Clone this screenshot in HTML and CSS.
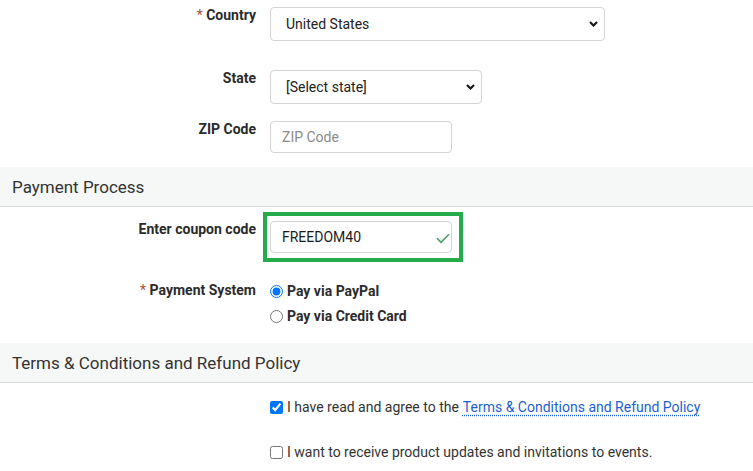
FILE: index.html
```html
<!DOCTYPE html>
<html>
<head>
<meta charset="utf-8">
<link rel="stylesheet" href="styles.css">
</head>
<body>
<div class="form">
  <div class="row row-country">
    <label class="lbl"><span class="req">*</span> Country</label>
    <div class="ctl">
      <div class="sel-wrap sel-wide">
        <select class="sel"><option>United States</option></select>
        <svg class="chev" width="9" height="6" viewBox="0 0 9 6"><path d="M1 1 L4.5 4.5 L8 1" fill="none" stroke="#1a1a1a" stroke-width="2.2"/></svg>
      </div>
    </div>
  </div>
  <div class="row row-state">
    <label class="lbl">State</label>
    <div class="ctl">
      <div class="sel-wrap sel-mid">
        <select class="sel"><option>[Select state]</option></select>
        <svg class="chev" width="9" height="6" viewBox="0 0 9 6"><path d="M1 1 L4.5 4.5 L8 1" fill="none" stroke="#1a1a1a" stroke-width="2.2"/></svg>
      </div>
    </div>
  </div>
  <div class="row row-zip">
    <label class="lbl">ZIP Code</label>
    <div class="ctl"><input class="inp" type="text" placeholder="ZIP Code"></div>
  </div>

  <div class="section-head">Payment Process</div>

  <div class="row row-coupon">
    <label class="lbl">Enter coupon code</label>
    <div class="ctl">
      <div class="coupon-wrap">
        <input class="inp" type="text" value="FREEDOM40">
        <svg class="ok" width="14" height="11" viewBox="0 0 14 11"><path d="M1 5.2 L5 9.3 L13 1.2" fill="none" stroke="#4f9a68" stroke-width="1.6"/></svg>
        <span class="highlight"></span>
      </div>
    </div>
  </div>

  <div class="row row-pay">
    <label class="lbl lbl-pay"><span class="req">*</span> Payment System</label>
    <div class="ctl radios">
      <label class="opt"><input type="radio" name="ps" checked> Pay via PayPal</label>
      <label class="opt opt-second"><input type="radio" name="ps"> Pay via Credit Card</label>
    </div>
  </div>

  <div class="section-head">Terms &amp; Conditions and Refund Policy</div>

  <div class="checks">
    <label class="chk chk-first"><input type="checkbox" checked> I have read and agree to the <a href="#" class="link">Terms &amp; Conditions and Refund Policy</a></label>
    <label class="chk"><input type="checkbox"> I want to receive product updates and invitations to events.</label>
  </div>
</div>
</body>
</html>
```

FILE: styles.css
```css
* { box-sizing: border-box; }
html, body { margin: 0; padding: 0; background: #fff; }
body {
  font-family: Roboto, "Liberation Sans", Arial, sans-serif;
  font-size: 14px;
  color: #333;
  width: 753px;
  height: 471px;
  overflow: hidden;
}
.form { padding-top: 7px; }

.row {
  display: grid;
  grid-template-columns: 256px 1fr;
  column-gap: 14px;
  align-items: start;
}
.lbl {
  text-align: right;
  font-weight: 700;
  line-height: 16px;
  color: #2b2b2b;
  padding-top: 0;
}
.req { color: #a9503a; font-weight: 400; }

.row-country { margin-bottom: 29px; }
.row-state { margin-bottom: 17px; }
.row-zip { margin-bottom: 14px; }
.row-coupon { margin-bottom: 26px; }
.row-pay { margin-bottom: 15px; }

.sel-wrap { position: relative; }
.sel-wide { width: 335px; }
.sel-mid { width: 212px; }
.sel {
  appearance: none;
  -webkit-appearance: none;
  width: 100%;
  height: 34px;
  border: 1px solid #d4d4d4;
  border-radius: 4px;
  background: #fff;
  padding: 0 24px 0 15px;
  font-family: Roboto, "Liberation Sans", Arial, sans-serif;
  font-size: 14px;
  color: #222;
  display: block;
}
.chev {
  position: absolute;
  right: 7px;
  top: 14px;
  pointer-events: none;
}

.inp {
  display: block;
  width: 182px;
  height: 32px;
  border: 1px solid #d4d4d4;
  border-radius: 4px;
  padding: 0 11px;
  font-family: Roboto, "Liberation Sans", Arial, sans-serif;
  font-size: 14px;
  color: #1c1c1c;
  background: #fff;
  outline: none;
}
.inp::placeholder { color: #8a8a8a; }

.coupon-wrap { position: relative; width: 182px; }
.ok { position: absolute; left: 166px; top: 12px; }
.highlight {
  position: absolute;
  left: -7px;
  top: -9px;
  width: 200px;
  height: 50px;
  border: 4px solid #24ac4b;
  pointer-events: none;
}

.section-head {
  height: 40px;
  padding-top: 2px;
  line-height: 37px;
  padding-left: 12px;
  background: #f6f7f7;
  border-bottom: 1px solid #d9d9d9;
  font-size: 17px;
  color: #333;
  margin-bottom: 14px;
}

.lbl-pay { padding-top: 3px; }
.radios { display: flex; flex-direction: column; }
.opt {
  display: flex;
  align-items: center;
  height: 24px;
  font-weight: 700;
  color: #2b2b2b;
}
.opt-second { margin-top: 1px; }
.opt input { margin: 1px 4px 0 0; width: 13px; height: 13px; }

.checks { padding-left: 270px; padding-top: 0; }
.chk {
  display: flex;
  align-items: center;
  height: 20px;
  color: #333;
}
.chk-first { margin-bottom: 25px; }
.chk input { margin: 0 4px 0 0; width: 13px; height: 13px; }
.chk .link { margin-left: 4px; }
.link {
  color: #1d5fd1;
  text-decoration: underline dotted;
  text-underline-offset: 3px;
}
```
